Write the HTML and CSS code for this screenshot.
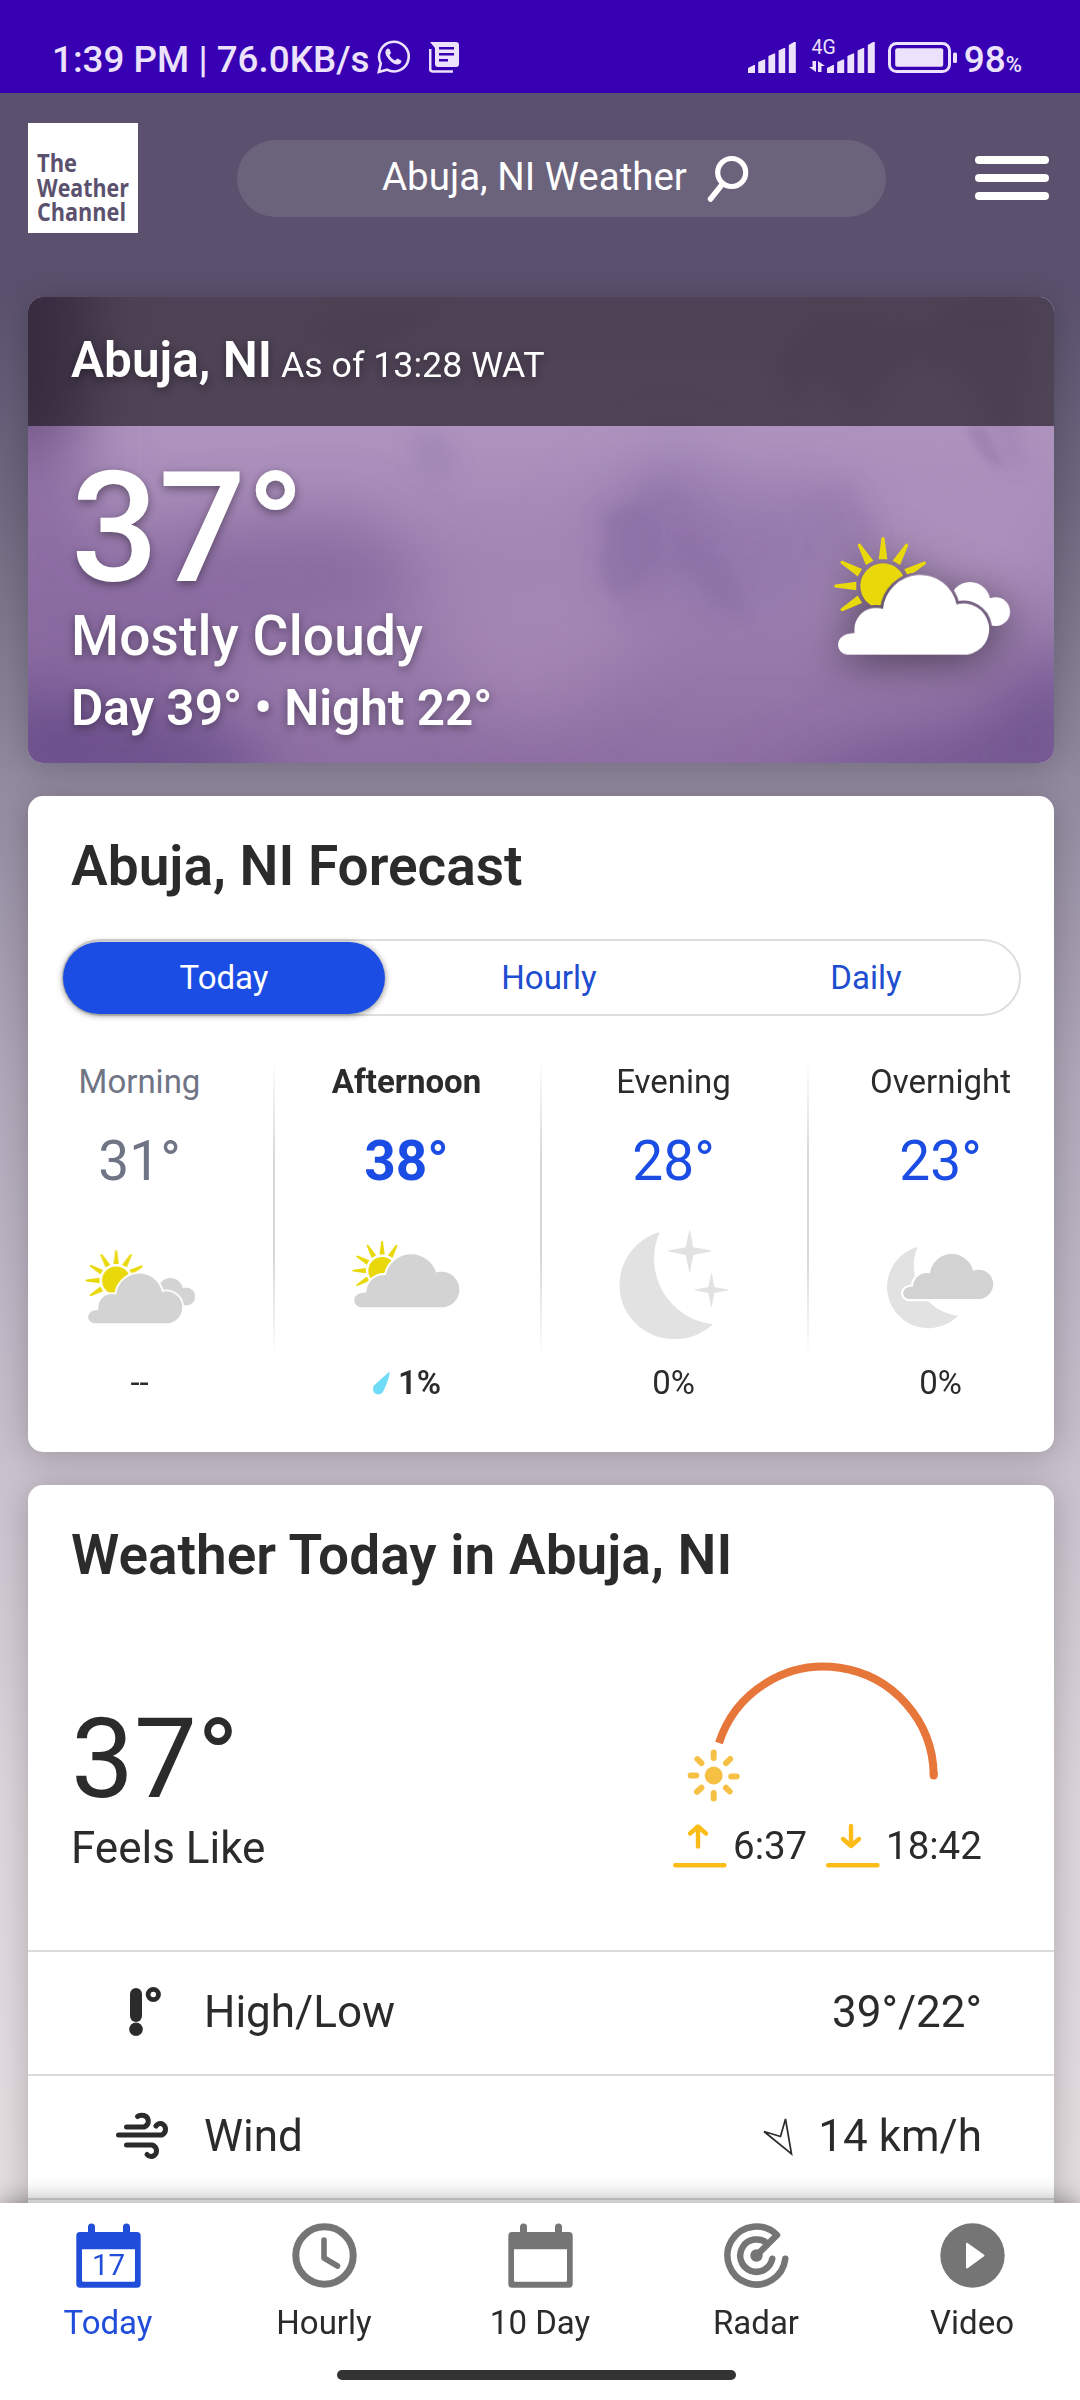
FILE: index.html
```html
<!DOCTYPE html>
<html lang="en">
<head>
<meta charset="utf-8">
<title>Abuja, NI Weather</title>
<link rel="stylesheet" href="styles.css">
</head>
<body>
<svg class="defs" width="0" height="0" aria-hidden="true">
  <defs>
    <path id="ray" d="M296 178 L304.500 115 Q309 107 313.500 115 L322 178 Z"/>
    <path id="front-cloud" d="M202 464 A29 31 0 0 1 174 434 Q176 402 224 399 A65 65 0 0 1 309 327 A112 112 0 0 1 530 313 A77.300 77.300 0 1 1 562 464 Z"/>
    <path id="day-cloud" d="M361.500 1307.300 A7.300 7.300 0 0 1 354.700 1300 Q355.200 1293 366.700 1292.600 A18 18 0 0 1 386.300 1275 A26 26 0 0 1 436.600 1272.500 A17.900 17.900 0 1 1 444.500 1307.300 Z"/>
    <mask id="behind" maskUnits="userSpaceOnUse" x="140" y="90" width="600" height="400">
      <rect x="140" y="90" width="600" height="400" fill="#fff"/>
      <use href="#front-cloud" fill="#000" stroke="#000" stroke-width="17"/>
    </mask>
    <mask id="behind-day" maskUnits="userSpaceOnUse" x="340" y="1220" width="130" height="130">
      <rect x="340" y="1220" width="130" height="130" fill="#fff"/>
      <use href="#day-cloud" fill="#000" stroke="#000" stroke-width="4"/>
    </mask>
    <g id="sun">
      <circle cx="309" cy="258" r="68"/>
      <use href="#ray"/>
      <use href="#ray" transform="rotate(30 309 258)"/>
      <use href="#ray" transform="rotate(61 309 258)"/>
      <use href="#ray" transform="rotate(-30 309 258)"/>
      <use href="#ray" transform="rotate(-60 309 258)"/>
      <use href="#ray" transform="rotate(-90 309 258)"/>
      <use href="#ray" transform="rotate(-120 309 258)"/>
    </g>
    <symbol id="mostly-cloudy" viewBox="156 105 540 366">
      <g mask="url(#behind)">
        <use href="#sun" class="sun-fill"/>
        <g fill="currentColor"><circle cx="570" cy="307" r="61"/><circle cx="647" cy="335" r="43"/></g>
      </g>
      <use href="#front-cloud" fill="currentColor"/>
    </symbol>
    <symbol id="signal" viewBox="0 0 48 31">
      <path fill="currentColor" d="M0 31V26L6 23H7V31ZM10.200 31V20L16 17.500H17.200V31ZM20.400 31V14L26 11.500H27.200V31ZM30.600 31V8.500L36 6H37.200V31ZM40.800 31V3L46 0H47.800V31Z"/>
    </symbol>
  </defs>
</svg>

<div class="screen">
  <div class="status">
    <div class="status-left">
      <span class="status-text">1:39 PM | 76.0KB/s</span>
      <svg class="ic-whatsapp" width="33" height="34" viewBox="0 0 33 34"><path d="M3.800 23.500A14.800 14.800 0 1 1 10 29.700L1.800 32Z" fill="none" stroke="currentColor" stroke-width="2.600"/><path fill="currentColor" d="M10.500 8.500C8 10 8 13 9.500 16C12 20.500 15.500 23.500 19.500 24.500C22 25 24.500 23.500 24.500 20.800L20.500 18.500L18 20.500C15.500 19.500 13.500 17.500 12.500 15L14 13L12.500 9Z"/></svg>
      <svg class="ic-news" width="30" height="31" viewBox="0 0 30 31"><path fill="currentColor" fill-rule="evenodd" d="M1 0H27Q30 0 30 3V22Q30 25 27 25H9Q6 25 6 22V6ZM10 5H25V7.500H10ZM10 11H25V13.500H10ZM10 17H19V19.500H10Z"/><path d="M1.200 7V27Q1.200 29.500 4 29.500H24" fill="none" stroke="currentColor" stroke-width="2.600"/></svg>
    </div>
    <div class="status-right">
      <svg class="signal" width="48" height="31"><use href="#signal"/></svg>
      <div class="network">
        <span>4G</span>
        <svg width="16" height="11" viewBox="0 0 16 11"><path fill="currentColor" d="M3.500 0H7V11L0 6H3.500ZM9 11V0L16 5H12.500V11Z"/></svg>
      </div>
      <svg class="signal2" width="48" height="31"><use href="#signal"/></svg>
      <svg class="battery" width="70" height="31" viewBox="0 0 70 31"><rect x="1.500" y="1.500" width="60" height="28" rx="7" fill="none" stroke="currentColor" stroke-width="3"/><rect x="7.200" y="6.200" width="48" height="18.500" rx="2" fill="currentColor"/><rect x="65" y="10.500" width="4" height="10.500" rx="1.500" fill="currentColor"/></svg>
      <span class="percent">98<small>%</small></span>
    </div>
  </div>

  <header class="top">
    <svg class="logo" width="110" height="110" viewBox="0 0 110 110">
      <rect width="110" height="110" fill="#fff"/>
      <g class="logo-text">
        <text x="9" y="49" textLength="40" lengthAdjust="spacingAndGlyphs">The</text>
        <text x="9" y="73.500" textLength="92" lengthAdjust="spacingAndGlyphs">Weather</text>
        <text x="9" y="98" textLength="89" lengthAdjust="spacingAndGlyphs">Channel</text>
      </g>
    </svg>
    <div class="search">
      <span>Abuja, NI Weather</span>
      <svg width="42" height="48" viewBox="0 0 42 48" fill="none" stroke="#fff"><circle cx="24.700" cy="17.500" r="14" stroke-width="5.200"/><path d="M15.500 29L3.500 44" stroke-width="5.500" stroke-linecap="round"/></svg>
    </div>
    <div class="menu"><i></i><i></i><i></i></div>
  </header>

  <main class="content">
    <section class="card hero">
      <svg class="sky" width="1026" height="466" viewBox="0 0 1026 466" preserveAspectRatio="none">
        <defs>
          <linearGradient id="skyfill" x1="0" y1="0" x2="0" y2="1"><stop offset="0" stop-color="#a98ebb"/><stop offset=".3" stop-color="#ae93be"/><stop offset=".6" stop-color="#9f83b2"/><stop offset="1" stop-color="#8e6fa3"/></linearGradient>
          <filter id="soft" x="-40%" y="-40%" width="180%" height="180%"><feGaussianBlur stdDeviation="32"/></filter>
          <filter id="wisp" x="-40%" y="-40%" width="180%" height="180%"><feGaussianBlur stdDeviation="9"/></filter>
          <filter id="edge" x="-40%" y="-40%" width="180%" height="180%"><feGaussianBlur stdDeviation="3"/></filter>
        </defs>
        <rect width="1026" height="466" fill="url(#skyfill)"/>
        <g filter="url(#soft)">
          <path d="M-40 100H55V200L80 260L150 230L330 220L400 280L350 330L200 350L120 500H-60Z" fill="#82639a" opacity=".7"/>
          <path d="M-60 -60H60V100L30 150H-60Z" fill="#6b4f80" opacity=".9"/>
          <path d="M-30 390L60 410L220 440L240 500H-40Z" fill="#654a88" opacity=".9"/>
          <path d="M740 490L850 450L950 430L1000 370L1060 350V500H740Z" fill="#6c4f8b" opacity=".8"/>
          <path d="M560 220L640 150L720 200L800 190L850 230L760 320L600 300Z" fill="#8f74aa" opacity=".7"/>
          <path d="M860 170L1026 180V290L920 330L800 320Z" fill="#b193bf" opacity=".7"/>
          <path d="M420 290L560 260L620 340L520 420L420 390Z" fill="#aa8cb8" opacity=".6"/>
        </g>
        <g filter="url(#wisp)">
          <path d="M568 290Q580 235 570 215L600 205Q620 175 650 185Q670 210 690 240L715 310L690 320L660 285L645 275L605 325L588 300Z" fill="#8268a0" opacity=".25"/>
          <path d="M760 115L790 75L805 95L830 120L880 60L930 70L960 120L980 170L1000 168L990 140L1000 90V0H940L900 30L790 20L750 60Z" fill="#846a9d" opacity=".22"/>
          <path d="M380 140L410 130L430 160L420 185L390 175Z" fill="#9278ab" opacity=".35"/>
          <path d="M270 40L300 20L420 10L340 60Z" fill="#846a9d" opacity=".2"/>
          <path d="M780 200L820 185L850 230L830 270L800 250Z" fill="#8f75a9" opacity=".35"/>
        </g>
        <g filter="url(#edge)">
          <path d="M572 262Q584 240 576 222Q600 200 622 212Q640 230 632 262Q612 285 590 300Q574 288 572 262Z" fill="#8067a0" opacity=".22"/>
          <path d="M645 266Q670 270 690 305Q710 322 722 318Q690 240 650 240Z" fill="#8067a0" opacity=".16"/>
          <path d="M938 130Q950 166 975 170Q965 140 955 128Z" fill="#846a9d" opacity=".3"/>
        </g>
      </svg>
      <div class="hero-head"><h1>Abuja, NI</h1><span>As of 13:28 WAT</span></div>
      <div class="hero-body">
        <div>
          <div class="hero-temp">37°</div>
          <div class="hero-phrase">Mostly Cloudy</div>
          <div class="hero-range">Day 39° • Night 22°</div>
        </div>
        <svg class="hero-icon" width="180" height="122"><use href="#mostly-cloudy"/></svg>
      </div>
    </section>

    <section class="card forecast">
      <h2>Abuja, NI Forecast</h2>
      <div class="tabs"><span class="tab active">Today</span><span class="tab mid">Hourly</span><span class="tab">Daily</span></div>
      <div class="parts">
        <div class="part past">
          <span class="label">Morning</span><span class="temp">31°</span>
          <svg class="ic" viewBox="84.500 1229 110 110"><g color="#d3d3d3"><use href="#mostly-cloudy" x="83.800" y="1248.700" width="112.200" height="76"/></g></svg>
          <span class="rain">--</span>
        </div>
        <div class="part now">
          <span class="label">Afternoon</span><span class="temp">38°</span>
          <svg class="ic" viewBox="352.500 1229 110 110"><g mask="url(#behind-day)"><use href="#sun" class="sun-fill" transform="translate(382.600 1270.700) scale(.203) translate(-309 -258)"/></g><use href="#day-cloud" fill="#d3d3d3"/></svg>
          <span class="rain"><svg width="18" height="24" viewBox="0 0 18 24"><path d="M17.500 .5Q18 6 11.500 20C9 25 1 24.500 1 18C1 16 1.500 15 3 13.500Z" fill="#6edcf6"/></svg>1%</span>
        </div>
        <div class="part">
          <span class="label">Evening</span><span class="temp">28°</span>
          <svg class="ic" viewBox="619 1230 110 110"><g fill="#e2e2e2"><path d="M659.700 1233 A55 55 0 0 0 619.400 1286 A54.200 54.200 0 0 0 673.600 1340 A55 55 0 0 0 713 1325.300 A66 66 0 0 1 659.700 1233Z"/><path id="star" d="M689.400 1230.700H690L693.300 1248.300L711.200 1251.600V1252.400L693.300 1255.900L690 1273H689.200L685.700 1255.900L668.200 1252.400V1251.600L685.700 1248.300Z"/><use href="#star" transform="translate(711.500 1291) scale(.8) translate(-689.700 -1252)"/></g></svg>
          <span class="rain">0%</span>
        </div>
        <div class="part">
          <span class="label">Overnight</span><span class="temp">23°</span>
          <svg class="ic" viewBox="885.500 1229 110 110"><path fill="#e2e2e2" d="M917 1247 A41.300 41.300 0 1 0 957.400 1315.700 A50 50 0 0 1 917 1247Z"/><path fill="#d2d2d2" stroke="#fff" stroke-width="4.400" paint-order="stroke" d="M908.500 1299 A6.200 6.200 0 0 1 902.600 1293 Q903 1287 912.500 1286.600 A14 14 0 0 1 929.500 1273.300 A21.900 21.900 0 0 1 972.500 1270.700 A14.700 14.700 0 1 1 979 1299 Z"/></svg>
          <span class="rain">0%</span>
        </div>
      </div>
    </section>

    <section class="card today">
      <h2>Weather Today in Abuja, NI</h2>
      <div class="summary">
        <div class="feels"><div class="feels-temp">37°</div><div class="feels-label">Feels Like</div></div>
        <div class="sunbox">
          <svg class="arc" width="248" height="144" viewBox="0 0 248 144" fill="none">
            <path d="M32 81A110 110 0 0 1 246.700 112.500" stroke="#e7763a" stroke-width="8"/>
            <path d="M246.700 112V113.500" stroke="#e7763a" stroke-width="8" stroke-linecap="round"/>
            <circle cx="26.700" cy="113.500" r="9" fill="#f6c044"/>
            <path transform="translate(26.700 113.500)" d="M0-17.500V-23M0 17.500V23M-17.500 0H-23M17.500 1H23M-12.300-12.300L-16.300-16.300M12.300-12.300L16.500-16.500M-12.300 12.300L-16.700 16.300M12.300 12.300L16 16" stroke="#f6c044" stroke-width="6" stroke-linecap="round"/>
          </svg>
          <div class="times">
            <svg width="54" height="46" viewBox="0 0 54 46" fill="none" stroke="#fbbc18" stroke-width="4.400" stroke-linecap="round" stroke-linejoin="round"><path d="M2.200 43.300H51.500M25 24.500V5.500M17 11.500L25 4.500L33 11.500"/></svg>
            <span class="rise">6:37</span>
            <svg width="54" height="46" viewBox="0 0 54 46" fill="none" stroke="#fbbc18" stroke-width="4.400" stroke-linecap="round" stroke-linejoin="round"><path d="M2.200 43.300H51.500M25 4V23M17 17L25 24L33 17"/></svg>
            <span class="set">18:42</span>
          </div>
        </div>
      </div>
      <div class="row">
        <svg class="row-ic" width="56" height="56" viewBox="0 0 56 56"><rect x="16" y="4" width="12" height="34" rx="6" fill="#2b2b2b"/><circle cx="22" cy="45.300" r="6.800" fill="#2b2b2b"/><circle cx="39.300" cy="10.500" r="5.200" fill="none" stroke="#2b2b2b" stroke-width="4.800"/></svg>
        <span>High/Low</span><span class="value">39°/22°</span>
      </div>
      <div class="row">
        <svg class="row-ic" width="56" height="56" viewBox="0 0 56 56" fill="none" stroke="#2b2b2b" stroke-width="5" stroke-linecap="round"><path d="M12.500 19H30A6 6 0 0 0 30 7.500Q26 6.500 23.500 8.500M4.500 27H48A6.300 6.300 0 0 0 48 15.700Q44 15 42 18M12.500 37H38A5.900 5.900 0 0 1 38 48.500Q35 49 33 46.500"/></svg>
        <span>Wind</span>
        <span class="value"><svg class="dir" width="32" height="42" viewBox="0 0 32 42"><path d="M2 16.500L18.500 21.500L23.500 4L29.500 39Z" fill="none" stroke="#2b2b2b" stroke-width="1.700"/></svg>14 km/h</span>
      </div>
      <div class="row"></div>
    </section>
  </main>

  <nav class="nav">
    <div class="nav-items">
      <a class="item on"><svg width="65" height="65" viewBox="0 0 65 65"><path fill="currentColor" fill-rule="evenodd" d="M4 9H12V4Q12 .5 15.500 .5T19 4V9H47V4Q47 .5 50.500 .5T54 4V9H61Q64.700 9 64.700 13V61Q64.700 64.700 61 64.700H4Q.3 64.700 .3 61V13Q.3 9 4 9ZM6 26.300V57.500Q6 58.700 7.300 58.700H57.500Q59 58.700 59 57.500V26.300Z"/><text x="32.500" y="51.500" text-anchor="middle" class="daynum">17</text></svg><b>Today</b></a>
      <a class="item"><svg width="65" height="65" viewBox="0 0 65 65" fill="none" stroke="currentColor"><circle cx="32.500" cy="32.500" r="28.700" stroke-width="7"/><path d="M32 17V35L45.500 43" stroke-width="5.600" stroke-linecap="round" stroke-linejoin="round"/></svg><b>Hourly</b></a>
      <a class="item"><svg width="65" height="65" viewBox="0 0 65 65"><path fill="currentColor" fill-rule="evenodd" d="M4 9H12V4Q12 .5 15.500 .5T19 4V9H47V4Q47 .5 50.500 .5T54 4V9H61Q64.700 9 64.700 13V61Q64.700 64.700 61 64.700H4Q.3 64.700 .3 61V13Q.3 9 4 9ZM6 26.300V57.500Q6 58.700 7.300 58.700H57.500Q59 58.700 59 57.500V26.300Z"/></svg><b>10 Day</b></a>
      <a class="item"><svg width="65" height="65" viewBox="0 0 65 65" fill="none" stroke="currentColor" stroke-width="6.500" stroke-linecap="round" stroke-linejoin="round"><path d="M61.300 35.700A29 29 0 1 1 53 12L32.500 32.500M48.300 35.700A16.200 16.200 0 1 1 43.500 20.800"/><circle cx="32.500" cy="32.500" r="6.200" fill="currentColor" stroke="none"/></svg><b>Radar</b></a>
      <a class="item"><svg width="65" height="65" viewBox="0 0 65 65"><circle cx="32.500" cy="32.500" r="32.200" fill="currentColor"/><path d="M27 20.800L43.500 32.500L27 44.500Z" fill="#fff" stroke="#fff" stroke-width="2" stroke-linejoin="round"/></svg><b>Video</b></a>
    </div>
    <div class="homebar"></div>
  </nav>
</div>
</body>
</html>
```
FILE: styles.css
```css
* { box-sizing: border-box; }
body { margin: 0; font-family: Roboto, "Liberation Sans", sans-serif; color: #2b2b2b; }
h1, h2 { margin: 0; }
svg { display: block; flex: none; }
.defs { position: absolute; }

.screen {
  width: 1080px; height: 2400px; overflow: hidden;
  display: flex; flex-direction: column;
  background: linear-gradient(#5b516e 0, #5b516e 290px, #6e687f 500px, #928a9f 780px, #b0a8b9 1080px, #c8c0cc 1460px, #dcd5db 1800px, #e3dde0 2180px);
}

/* Android status bar */
.status {
  flex: none; height: 93px; padding: 42px 58px 0 52px;
  display: flex; justify-content: space-between; align-items: flex-start;
  background: #3700b3; color: #ece2fb;
}
.status-left, .status-right { display: flex; align-items: flex-start; }
.status-text { width: 325px; font-size: 36.800px; font-weight: 500; line-height: 36px; white-space: nowrap; }
.ic-whatsapp { margin-top: -2px; }
.ic-news { margin-left: 19px; }
.network { width: 31px; display: flex; flex-direction: column; align-items: flex-end; font-size: 19.500px; line-height: 20px; margin-top: -4px; gap: 3px; }
.network span { margin-right: -9px; }
.network svg { margin-right: 2px; }
.battery { margin-left: 13px; }
.percent { display: block; margin-left: 6px; font-size: 37px; font-weight: 500; line-height: 36px; white-space: nowrap; }
.percent small { font-size: 22px; }

/* Site header */
.top { flex: none; height: 204px; padding: 30px 31px 0 28px; display: flex; align-items: flex-start; justify-content: space-between; }
.logo-text { font-family: "Open Sans", "Noto Sans", sans-serif; font-weight: 700; font-size: 25.500px; fill: #5b516e; }
.search {
  width: 649px; height: 77px; margin: 17px -10px 0 0; padding: 0 137px 0 145px;
  display: flex; align-items: center; justify-content: space-between;
  border-radius: 39px; background: rgba(255,255,255,.1);
  font-size: 38.500px; line-height: 44px; color: #fff; white-space: nowrap;
}
.search span { margin-top: -4px; }
.menu { width: 74px; margin-top: 33px; display: flex; flex-direction: column; gap: 10px; }
.menu i { height: 8px; border-radius: 4px; background: #fff; }

.content { flex: 1; min-height: 0; padding: 0 26px 0 28px; display: flex; flex-direction: column; gap: 33px; }
.card { flex: none; border-radius: 15px; box-shadow: 0 4px 32px rgba(0,0,0,.22); background: #fff; }

/* Current conditions */
.hero { position: relative; height: 466px; overflow: hidden; color: #fff; text-shadow: 0 3px 10px rgba(0,0,0,.4); }
.sky { position: absolute; left: 0; top: 0; }
.hero-head { position: relative; height: 129px; padding: 33px 43px 0; display: flex; align-items: baseline; gap: 9px; background: rgba(17,15,17,.6); }
.hero-head h1 { font-size: 49.500px; line-height: 60px; font-weight: 600; }
.hero-head span { font-size: 35.750px; }
.hero-body { position: relative; padding: 26px 42px 0 43px; display: flex; justify-content: space-between; }
.hero-temp { font-size: 154px; line-height: 154px; font-weight: 500; }
.hero-phrase { font-size: 55px; line-height: 60px; font-weight: 500; letter-spacing: .15px; }
.hero-range { margin-top: 12px; font-size: 49.500px; line-height: 60px; font-weight: 600; }
.hero-icon { margin-top: 83px; color: #fff; overflow: visible; filter: drop-shadow(0 8px 22px rgba(0,0,0,.5)); }
.hero .sun-fill { fill: #e8d009; }
.sun-fill { fill: #e9d80a; }

h2 { font-size: 55px; line-height: 64px; font-weight: 600; padding: 38px 43px 0; }

/* Forecast */
.forecast { height: 656px; }
.tabs { width: 959px; height: 77px; margin: 41px 0 0 34px; border: 2px solid #dedede; border-radius: 39px; display: flex; align-items: center; font-size: 33px; color: #204dd0; }
.tab { flex: 1; text-align: center; line-height: 72px; }
.tab.mid { flex: none; width: 328px; }
.tab.active { flex: none; width: 322px; margin-left: -1px; border-radius: 36px; background: #1b4de4; color: #fff; box-shadow: 0 1px 6px rgba(0,0,0,.5); }
.parts { margin: 42px 0 0 -20px; width: 1068px; display: grid; grid-template-columns: repeat(4, 267px); }
.part { height: 300px; padding: 4px 4px 0 0; display: flex; flex-direction: column; align-items: center; background: linear-gradient(transparent, #d6d6d6 35%, #d6d6d6 65%, transparent) right / 2px 100% no-repeat; }
.part:last-child { background: none; }
.label { font-size: 33px; line-height: 40px; }
.temp { margin-top: 29px; font-size: 55px; line-height: 60px; color: #1b4de4; }
.ic { width: 110px; height: 110px; margin-top: 38px; }
.rain { margin-top: 24px; font-size: 33px; line-height: 40px; display: flex; align-items: center; gap: 8px; }
.past .label, .past .temp { color: #6f7585; }
.now .label, .now .temp { font-weight: 700; }
.now .rain { font-weight: 600; }

/* Today details */
.today { height: 780px; }
.summary { height: 363px; padding: 0 72px 0 43px; display: flex; justify-content: space-between; }
.feels { padding-top: 117px; }
.feels-temp { font-size: 112px; line-height: 110px; }
.feels-label { margin-top: 9px; font-size: 44px; line-height: 50px; }
.sunbox { width: 309px; padding-top: 75px; }
.arc { margin-left: 14px; overflow: visible; }
.times { margin-top: 16px; display: flex; align-items: flex-start; font-size: 38.500px; line-height: 44px; white-space: nowrap; }
.times span { margin-top: 2px; }
.rise { width: 93px; margin-left: 6px; }
.set { margin-left: 6px; }
.row { height: 124px; border-top: 2px solid #dbdbdb; padding: 0 72px 2px 86px; display: flex; align-items: center; font-size: 44px; }
.row-ic { margin-right: 34px; }
.value { margin-left: auto; display: flex; align-items: center; gap: 24px; }

/* Bottom navigation */
.nav { position: relative; flex: none; height: 197px; background: #fff; box-shadow: 0 0 24px rgba(0,0,0,.42); }
.nav-items { display: grid; grid-template-columns: repeat(5, 216px); padding-top: 20px; }
.item { display: flex; flex-direction: column; align-items: center; gap: 15px; font-size: 33px; line-height: 40px; color: #757575; }
.item b { font-weight: 400; color: #2b2b2b; }
.item.on, .item.on b { color: #204dd9; }
.daynum { font-size: 29.500px; fill: #204dd9; }
.homebar { width: 399px; height: 10px; margin: 27px 0 0 337px; border-radius: 5px; background: #333; }
```
